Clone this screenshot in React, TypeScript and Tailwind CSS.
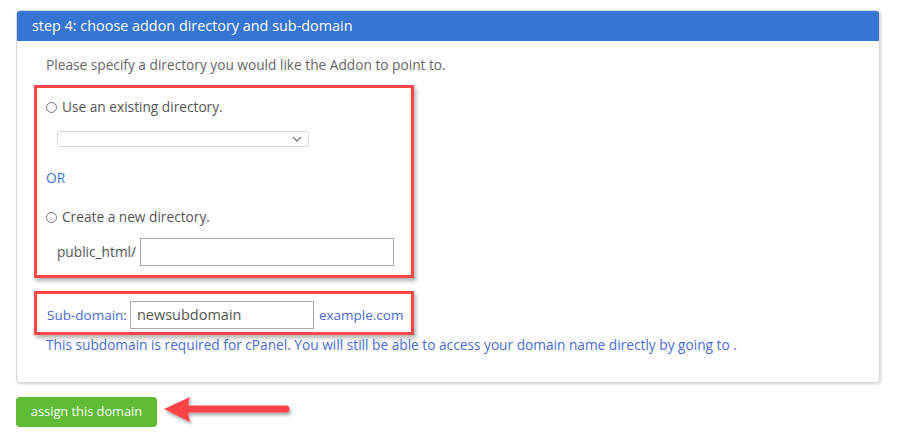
import React from "react";

function Radio() {
  return <span className="inline-block w-[11px] h-[11px] rounded-full border border-[#777] bg-white mr-[5px] shrink-0" />;
}

export default function App() {
  return (
    <div className="w-[906px] h-[435px] bg-white pt-[10px] pl-[16px] text-[14px] text-[#555]" style={{ fontFamily: '"Open Sans", "Noto Sans", sans-serif' }}>
      <div className="w-[864px] h-[373px] rounded-[4px] border border-[#d6d6d6] shadow-[1px_1px_3px_rgba(0,0,0,0.18)] overflow-hidden">
        <div className="h-[30px] bg-[#3575d3] text-white text-[14.4px] flex items-center pl-[15px] leading-none">
          step 4: choose addon directory and sub-domain
        </div>
        <div className="pl-[17px] pt-[13px]">
          <div className="pl-[12px] h-[22px] leading-[22px] text-[#666] text-[13.7px]">Please specify a directory you would like the Addon to point to.</div>
          <div className="mt-[9px] w-[380px] border-[3px] border-[#ff4646] shadow-[2px_3px_4px_rgba(0,0,0,0.3)] pl-[9px] pt-[9px] pb-[9px] text-[13.7px]">
            <div className="flex items-center h-[20px]"><Radio />Use an existing directory.</div>
            <div className="mt-[14px] ml-[11px] w-[252px] h-[16px] border border-[#dcdcdc] rounded-[2px] flex items-center justify-end pr-[6px]">
              <svg width="10" height="6" viewBox="0 0 10 6"><path d="M1 1l4 4 4-4" fill="none" stroke="#888" strokeWidth="1.6" /></svg>
            </div>
            <div className="mt-[21px] h-[20px] leading-[20px] text-[#3a74d8]">OR</div>
            <div className="mt-[19px] flex items-center h-[20px]"><Radio />Create a new directory.</div>
            <div className="mt-[11px] ml-[11px] flex items-center">
              <span className="mr-[4px]">public_html/</span>
              <div className="w-[254px] h-[28px] border border-[#aaa]" />
            </div>
          </div>
          <div className="mt-[13px] w-[380px] border-[3px] border-[#ff4646] shadow-[2px_3px_4px_rgba(0,0,0,0.3)] pl-[10px] pt-[7px] pb-[3px] flex items-center text-[13.5px] text-[#4a6cd6]">
            <span className="mr-[3px]">Sub-domain:</span>
            <div className="w-[184px] h-[28px] border border-[#aaa] flex items-center pl-[6px] text-[#555] text-[14.5px]">newsubdomain</div>
            <span className="ml-[5px]">example.com</span>
          </div>
          <div className="pl-[12px] h-[20px] leading-[20px] text-[13.7px] text-[#4a6cd6]">This subdomain is required for cPanel. You will still be able to access your domain name directly by going to .</div>
        </div>
      </div>
      <div className="mt-[12px] flex items-center">
        <div className="w-[141px] h-[30px] rounded-[4px] bg-[#5fba34] text-white text-[12.8px] flex items-center justify-center">assign this domain</div>
        <svg width="135" height="34" viewBox="0 0 135 34" className="ml-[5px]">
          <defs>
            <filter id="sh" x="-20%" y="-40%" width="140%" height="200%">
              <feDropShadow dx="1.5" dy="2.5" stdDeviation="1.5" floodColor="#000" floodOpacity="0.35" />
            </filter>
          </defs>
          <g filter="url(#sh)">
            <line x1="26" y1="14" x2="124" y2="14" stroke="#ff4246" strokeWidth="7" strokeLinecap="round" />
            <path d="M2 14 L28 2 Q24 14 28 27 Z" fill="#ff4246" />
          </g>
        </svg>
      </div>
    </div>
  );
}
